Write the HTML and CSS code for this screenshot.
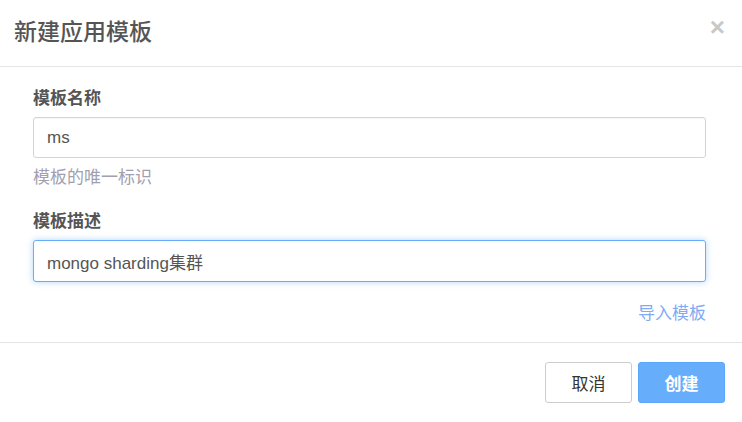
FILE: index.html
```html
<!DOCTYPE html>
<html lang="zh-CN">
<head>
  <meta charset="UTF-8">
  <title>新建应用模板</title>
  <link rel="stylesheet" href="styles.css">
</head>
<body>
  <div class="modal">
    <div class="modal-header">
      <h4 class="modal-title">新建应用模板</h4>
      <span class="close">&times;</span>
    </div>

    <div class="modal-body">
      <div class="form-group">
        <label>模板名称</label>
        <input class="form-control" type="text" value="ms">
        <p class="help-block">模板的唯一标识</p>
      </div>
      <div class="form-group">
        <label>模板描述</label>
        <input class="form-control focus" type="text" value="mongo sharding集群">
      </div>
      <div class="import">
        <a href="#">导入模板</a>
      </div>
    </div>

    <div class="modal-footer">
      <button class="btn">取消</button>
      <button class="btn btn-primary">创建</button>
    </div>
  </div>
</body>
</html>
```

FILE: styles.css
```css
body {
  margin: 0;
  padding: 0;
  background-color: #fff;
  font-family: "Liberation Sans", "Noto Sans CJK SC", sans-serif;
  color: #555;
}
.modal {
  width: 742px;
  height: 422px;
  background-color: #fff;
}
.modal-header {
  display: flex;
  justify-content: space-between;
  align-items: center;
  height: 67px;
  padding: 0 17px 6px 14px;
  box-sizing: border-box;
  border-bottom: 1px solid #e5e5e5;
}
.modal-title {
  margin: 0;
  font-size: 23px;
  font-weight: 500;
  color: #555;
}
.close {
  font-size: 26px;
  font-weight: bold;
  color: #c8c8c8;
  line-height: 1;
  margin-top: -6px;
}
.modal-body {
  padding: 22px 36px 0 33px;
  height: 275px;
  box-sizing: border-box;
}
.form-group {
  margin-bottom: 22px;
}
.form-group + .form-group {
  margin-top: 24px;
}
label {
  display: block;
  font-size: 17px;
  line-height: 20px;
  font-weight: bold;
  margin-bottom: 8px;
}
.form-control {
  display: block;
  width: 100%;
  height: 41px;
  box-sizing: border-box;
  padding: 0 13px;
  border: 1px solid #d4d4d4;
  border-radius: 3px;
  font-family: "Liberation Sans", "Noto Sans CJK SC", sans-serif;
  font-size: 17px;
  color: #555;
  outline: none;
  box-shadow: inset 0 1px 1px rgba(0, 0, 0, 0.04);
}
.form-control.focus {
  height: 42px;
  border-color: #66aefc;
  box-shadow: 0 0 6px rgba(102, 174, 252, 0.5);
}
.help-block {
  margin: 10px 0 0;
  font-size: 17px;
  line-height: 20px;
  color: #a19fb0;
}
.import {
  text-align: right;
  line-height: 20px;
}
.import a {
  font-size: 17px;
  color: #7fabf5;
  text-decoration: none;
}
.modal-footer {
  display: flex;
  justify-content: flex-end;
  gap: 6px;
  padding: 19px 17px 0 0;
  border-top: 1px solid #e5e5e5;
}
.btn {
  width: 87px;
  height: 41px;
  font-family: "Liberation Sans", "Noto Sans CJK SC", sans-serif;
  font-size: 17px;
  color: #333;
  background-color: #fff;
  border: 1px solid #ccc;
  border-radius: 3px;
}
.btn-primary {
  color: #fff;
  font-weight: bold;
  background-color: #66aefc;
  border-color: #5aa6f8;
}
```
